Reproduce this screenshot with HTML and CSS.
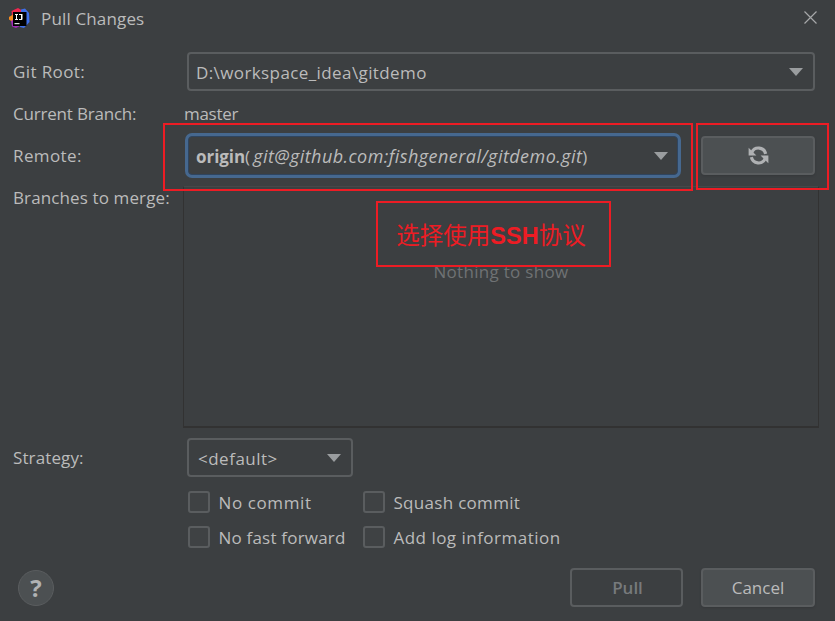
FILE: index.html
```html
<!DOCTYPE html>
<html lang="en">
<head>
<meta charset="utf-8">
<title>Pull Changes</title>
<link rel="stylesheet" href="styles.css">
</head>
<body>
<div class="dialog">
  <header class="titlebar">
    <svg class="app-icon" width="21" height="21" viewBox="0 0 21 21">
      <path d="M2.5 3 L9 0 L14 3 L7 9 L3.5 12 Z" fill="#f0264f"/>
      <path d="M12 1.5 L16 0.5 L20 5 L20.5 14 L15 20 L11 19 Z" fill="#3f6fe8"/>
      <path d="M0 9 L4 6.5 L6 12 L3 13.5 L0 11.5 Z" fill="#f78c1f"/>
      <path d="M2 13 L6 11 L11 18 L7 20 L3 18.5 Z" fill="#a32bb8"/>
      <rect x="4" y="4" width="13.5" height="14" fill="#000"/>
      <rect x="5.5" y="15" width="5" height="1.2" fill="#ddd"/>
      <path d="M6 6h3v1h-1v4h1v1H6v-1h1V7H6zM10 6h3.5v5q0 1-1 1h-2.5v-1h2V7h-2z" fill="#fff"/>
    </svg>
    <h1 class="title">Pull Changes</h1>
    <svg class="close" width="13" height="13" viewBox="0 0 13 13"><path d="M0.5 0.5 L12.5 12.5 M12.5 0.5 L0.5 12.5" stroke="#a6a8a9" stroke-width="1.2" fill="none"/></svg>
  </header>

  <div class="row row-root">
    <span class="label label-root">Git Root:</span>
    <div class="combo combo-wide"><span class="root-text">D:\workspace_idea\gitdemo</span><i class="arrow"></i></div>
  </div>
  <div class="row row-branch">
    <span class="label label-branch">Current Branch:</span>
    <span class="value">master</span>
  </div>
  <div class="row row-remote">
    <span class="label label-root">Remote:</span>
    <div class="combo combo-focus"><span class="remote-text"><b>origin</b>(<em>git@github.com:fishgeneral/gitdemo.git</em>)</span><i class="arrow"></i></div>
    <button class="btn btn-refresh" type="button" aria-label="Refresh">
      <svg width="21" height="21" viewBox="0 0 20 20" fill="none">
        <path d="M16.8 8.4 A7 7 0 0 0 3.6 7" stroke="#afb1b3" stroke-width="3"/>
        <path d="M0.6 2.6 V10 H8 Z" fill="#afb1b3"/>
        <path d="M3.2 11.6 A7 7 0 0 0 16.4 13" stroke="#afb1b3" stroke-width="3"/>
        <path d="M19.4 17.4 V10 H12 Z" fill="#afb1b3"/>
      </svg>
    </button>
  </div>
  <div class="row row-list">
    <span class="label label-list">Branches to merge:</span>
    <div class="list"><span class="empty">Nothing to show</span></div>
  </div>
  <div class="row row-strategy">
    <span class="label label-list">Strategy:</span>
    <div class="combo combo-small"><span class="default-text">&lt;default&gt;</span><i class="arrow"></i></div>
  </div>
  <div class="checks">
    <label class="check sp-a"><i class="box"></i>No commit</label>
    <label class="check sp-b"><i class="box"></i>Squash commit</label>
    <label class="check sp-c"><i class="box"></i>No fast forward</label>
    <label class="check sp-d"><i class="box"></i>Add log information</label>
  </div>
  <footer class="footer">
    <span class="help">?</span>
    <div class="actions">
      <button class="btn btn-disabled" type="button">Pull</button>
      <button class="btn" type="button">Cancel</button>
    </div>
  </footer>

  <div class="mark mark-remote"></div>
  <div class="mark mark-refresh"></div>
  <div class="mark mark-note"><span>选择使用<b>SSH</b>协议</span></div>
</div>
</body>
</html>
```

FILE: styles.css
```css
* { box-sizing: border-box; }
html, body { margin: 0; padding: 0; }
body {
  background: #3c3f41;
  color: #bbbbbb;
  font-family: "Open Sans", "Noto Sans", sans-serif;
  font-size: 17px;
  overflow: hidden;
}
.dialog {
  position: relative;
  width: 835px;
  height: 621px;
  padding: 0 20px 0 13px;
  display: flex;
  flex-direction: column;
}
.titlebar {
  height: 52px;
  margin-left: -4px;
  margin-right: -4px;
  padding-bottom: 15px;
  display: flex;
  align-items: center;
}
.app-icon { flex: none; }
.title {
  margin: 0 0 0 11px;
  font-size: 17px;
  font-weight: 400;
  letter-spacing: 0.15px;
  flex: 1;
}
.close { margin-right: 2px; margin-top: -3px; }

.row { display: flex; align-items: center; }
.label { width: 171px; flex: none; }
.label-root { letter-spacing: 0.4px; }
.label-branch { letter-spacing: -0.2px; margin-top: -2px; }
.label-list { letter-spacing: 0.12px; }
.value { letter-spacing: -0.3px; margin-top: -2px; }
.row-branch { height: 22px; margin-top: 12px; }
.row-remote { margin-top: 11px; }
.row-list { margin-top: 11px; align-items: flex-start; }
.row-strategy { margin-top: 10px; }

.combo {
  height: 39px;
  margin-left: 3px;
  padding: 0 10px 0 7px;
  border: 2px solid #5a5d5f;
  border-radius: 4px;
  background: #3c3f41;
  display: flex;
  align-items: center;
  justify-content: space-between;
}
.combo-wide { flex: 1; }
.combo-small { width: 165.5px; padding-left: 9px; padding-right: 10px; }
.combo-focus {
  width: 490px;
  margin-left: 4px;
  border: 1px solid #2f4560;
  box-shadow: 0 0 0 3px #46688f;
  padding-left: 7px;
  padding-right: 9px;
}
.root-text { letter-spacing: 0.4px; padding-top: 2px; }
.default-text { letter-spacing: 0.5px; padding-top: 2px; }
.arrow {
  width: 0;
  height: 0;
  border-left: 7px solid transparent;
  border-right: 7px solid transparent;
  border-top: 8px solid #9a9d9f;
}
.remote-text { color: #bbbbbb; }
.remote-text b { font-weight: 700; letter-spacing: -0.05px; }
.remote-text em { font-size: 18px; letter-spacing: 0.44px; margin-left: 3px; }

.btn {
  width: 114px;
  height: 39px;
  padding: 0;
  border: 2px solid #5a5d5f;
  border-radius: 4px;
  background: #4c5052;
  color: #bbbbbb;
  font: inherit;
  display: flex;
  align-items: center;
  justify-content: center;
  box-shadow: 0 1px 2px #35383a;
}
.btn-refresh { margin-left: 23px; }
.btn-disabled {
  width: 113px;
  background: #3c3f41;
  color: #777a7c;
  font-weight: 600;
  box-shadow: none;
  padding-left: 2px;
}

.list {
  width: 636px;
  height: 242px;
  margin-left: -1px;
  margin-right: -4px;
  border: 1px solid #323232;
  border-bottom-width: 2px;
  border-top-color: #454849;
  display: flex;
  align-items: center;
  justify-content: center;
}
.empty { color: #6f7274; margin-top: -70px; letter-spacing: 0.3px; }

.checks {
  margin-top: 14px;
  margin-left: 174.5px;
  display: grid;
  grid-template-columns: 175px auto;
  grid-auto-rows: 21px;
  row-gap: 14px;
  justify-content: start;
}
.check { display: flex; align-items: center; white-space: nowrap; padding-top: 1px; }
.sp-a { letter-spacing: 0.6px; }
.sp-b { letter-spacing: 0.3px; }
.sp-c { letter-spacing: 0.2px; }
.sp-d { letter-spacing: 0.48px; }
.box {
  width: 22px;
  height: 22px;
  margin-right: 9px;
  margin-top: -1px;
  flex: none;
  border: 2px solid #5a5d5f;
  border-radius: 3px;
  background: #3f4244;
}

.footer {
  margin-top: 21px;
  display: flex;
  align-items: center;
  justify-content: space-between;
}
.help {
  width: 36px;
  height: 36px;
  margin-left: 5px;
  border: 1px solid #5a5d5f;
  border-radius: 50%;
  background: #4c5052;
  color: #b0b2b4;
  font-size: 24px;
  font-weight: 700;
  display: flex;
  align-items: center;
  justify-content: center;
}
.actions { display: flex; gap: 18px; }

.mark {
  position: absolute;
  border: 2px solid #ed1c24;
}
.mark-remote { left: 163px; top: 123px; width: 530px; height: 68px; }
.mark-refresh { left: 696px; top: 123px; width: 133px; height: 67px; }
.mark-note {
  left: 376px;
  top: 201px;
  width: 235px;
  height: 66px;
  padding-right: 5px;
  display: flex;
  align-items: center;
  justify-content: center;
  color: #ed1c24;
  font-family: "Noto Sans CJK SC", sans-serif;
  font-size: 23.5px;
  font-weight: 400;
}
.mark-note b { font-family: "Liberation Sans", sans-serif; font-weight: 700; }
```
